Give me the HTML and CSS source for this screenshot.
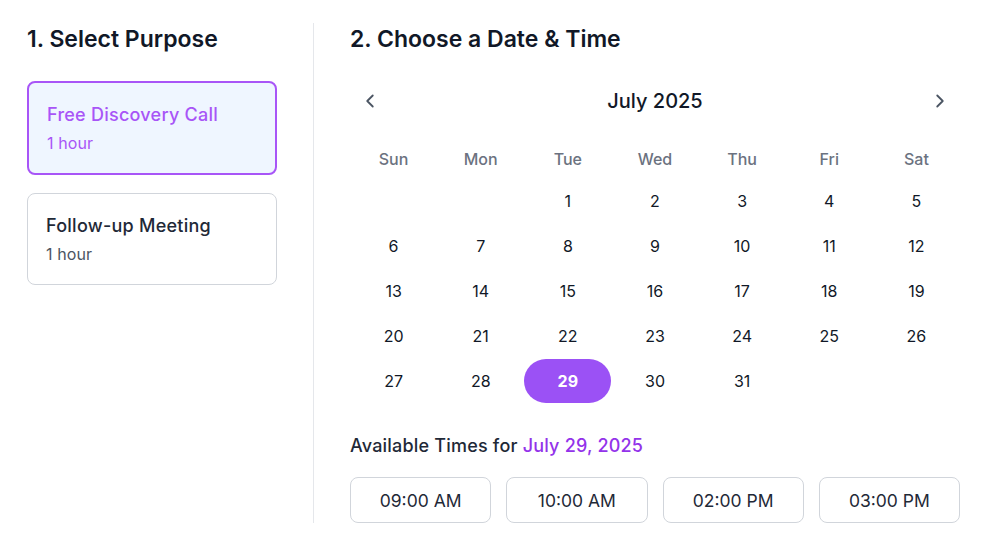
FILE: index.html
```html
<!DOCTYPE html>
<html lang="en">
<head>
<meta charset="utf-8">
<title>Book a Meeting</title>
<link rel="stylesheet" href="styles.css">
</head>
<body>
<main class="booking">
  <section class="purpose">
    <h2 class="step-title">1. Select Purpose</h2>
    <div class="purpose-list">
      <div class="purpose-card selected">
        <div class="purpose-name">Free Discovery Call</div>
        <div class="purpose-duration">1 hour</div>
      </div>
      <div class="purpose-card">
        <div class="purpose-name">Follow-up Meeting</div>
        <div class="purpose-duration">1 hour</div>
      </div>
    </div>
  </section>
  <section class="schedule">
    <h2 class="step-title">2. Choose a Date &amp; Time</h2>
    <div class="cal-header">
      <button class="nav-btn" aria-label="Previous month">
        <svg width="22" height="22" viewBox="0 0 24 24" fill="none" stroke="currentColor" stroke-width="2" stroke-linecap="round" stroke-linejoin="round"><path d="M15 18l-6-6 6-6"/></svg>
      </button>
      <div class="month">July 2025</div>
      <button class="nav-btn" aria-label="Next month">
        <svg width="22" height="22" viewBox="0 0 24 24" fill="none" stroke="currentColor" stroke-width="2" stroke-linecap="round" stroke-linejoin="round"><path d="M9 18l6-6-6-6"/></svg>
      </button>
    </div>
    <div class="weekdays">
      <div>Sun</div><div>Mon</div><div>Tue</div><div>Wed</div><div>Thu</div><div>Fri</div><div>Sat</div>
    </div>
    <div class="days">
      <div class="day empty"></div><div class="day empty"></div>
      <div class="day">1</div><div class="day">2</div><div class="day">3</div><div class="day">4</div><div class="day">5</div>
      <div class="day">6</div><div class="day">7</div><div class="day">8</div><div class="day">9</div><div class="day">10</div><div class="day">11</div><div class="day">12</div>
      <div class="day">13</div><div class="day">14</div><div class="day">15</div><div class="day">16</div><div class="day">17</div><div class="day">18</div><div class="day">19</div>
      <div class="day">20</div><div class="day">21</div><div class="day">22</div><div class="day">23</div><div class="day">24</div><div class="day">25</div><div class="day">26</div>
      <div class="day">27</div><div class="day">28</div><div class="day selected">29</div><div class="day">30</div><div class="day">31</div>
    </div>
    <h3 class="times-title">Available Times for <span class="times-date">July 29, 2025</span></h3>
    <div class="times">
      <button class="time-btn">09:00 AM</button>
      <button class="time-btn">10:00 AM</button>
      <button class="time-btn">02:00 PM</button>
      <button class="time-btn">03:00 PM</button>
    </div>
  </section>
</main>
</body>
</html>
```
FILE: styles.css
```css
* { box-sizing: border-box; }
html, body { margin: 0; padding: 0; background: #ffffff; }
body {
  font-family: Inter, "Noto Sans", "Liberation Sans", sans-serif;
  color: #111827;
}
.booking {
  display: flex;
  padding: 23px 28px 0 27px;
}
.purpose {
  width: 287px;
  padding-right: 36px;
  border-right: 1px solid #e5e7eb;
}
.schedule {
  flex: 1;
  padding-left: 36px;
}
.step-title {
  margin: 0;
  font-size: 23px;
  line-height: 32px;
  font-weight: 600;
  color: #111827;
}
.purpose-list {
  display: flex;
  flex-direction: column;
  gap: 18px;
  margin-top: 26px;
}
.purpose-card {
  border: 1px solid #d1d5db;
  border-radius: 8px;
  padding: 18px;
  background: #fff;
}
.purpose-card.selected {
  border: 2px solid #a855f7;
  background: #eff6ff;
}
.purpose-name {
  font-size: 18px;
  line-height: 28px;
  font-weight: 500;
  letter-spacing: 0.25px;
  color: #1f2937;
}
.purpose-duration {
  margin-top: 2px;
  font-size: 16px;
  line-height: 24px;
  letter-spacing: 0.1px;
  color: #4b5563;
}
.selected .purpose-name { color: #a855f7; }
.selected .purpose-duration { color: #a855f7; }
.cal-header {
  display: flex;
  align-items: center;
  justify-content: space-between;
  height: 40px;
  margin-top: 26px;
}
.nav-btn {
  width: 40px;
  height: 40px;
  border: 0;
  background: transparent;
  color: #4b5563;
  display: flex;
  align-items: center;
  justify-content: center;
  padding: 0;
}
.month {
  font-size: 20px;
  font-weight: 500;
  color: #111827;
}
.weekdays {
  display: grid;
  grid-template-columns: repeat(7, 1fr);
  margin-top: 18px;
}
.weekdays div {
  height: 40px;
  display: flex;
  align-items: center;
  justify-content: center;
  font-size: 16px;
  font-weight: 500;
  color: #6b7280;
}
.days {
  display: grid;
  grid-template-columns: repeat(7, 1fr);
  row-gap: 1px;
}
.day {
  height: 44px;
  display: flex;
  align-items: center;
  justify-content: center;
  font-size: 16px;
  color: #111827;
  border-radius: 22px;
}
.day.selected {
  background: #9b51f5;
  color: #fff;
  font-weight: 700;
}
.times-title {
  margin: 29px 0 0;
  font-size: 18px;
  line-height: 28px;
  font-weight: 500;
  letter-spacing: 0.2px;
  color: #1f2937;
}
.times-date { color: #9333ea; }
.times {
  display: grid;
  grid-template-columns: repeat(4, 1fr);
  gap: 15px;
  margin-top: 17px;
}
.time-btn {
  height: 46px;
  border: 1px solid #d1d5db;
  border-radius: 8px;
  background: #fff;
  font-family: inherit;
  font-size: 17.5px;
  color: #1f2937;
}
```
